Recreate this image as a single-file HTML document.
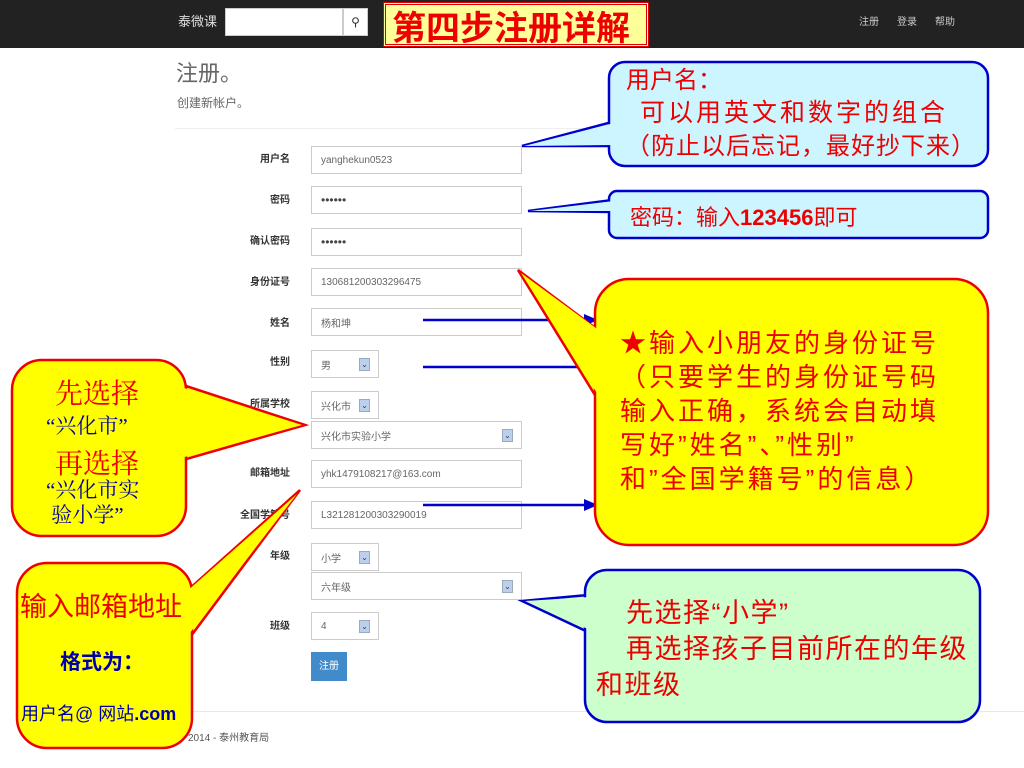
<!DOCTYPE html>
<html><head><meta charset="utf-8"><style>
*{margin:0;padding:0;box-sizing:border-box}
body{width:1024px;height:768px;position:relative;background:#fff;overflow:hidden;font-family:"Liberation Sans","Noto Sans CJK SC",sans-serif}
.a{position:absolute}
.nav{left:0;top:0;width:1024px;height:48px;background:#222}
.lbl{position:absolute;right:734px;font-size:10px;font-weight:bold;color:#333;text-align:right;white-space:nowrap}
.in{position:absolute;left:311px;width:211px;height:28px;border:1px solid #ccc;background:#fff;font-size:10px;color:#666;padding:0 9px;display:flex;align-items:center}
.sel{width:68px}
.arr{position:absolute;right:8px;top:7px;width:11px;height:13px;background:#bcd0ee;border:1px solid #9ab;font-size:8px;line-height:11px;text-align:center;color:#335}
.t{position:absolute;font-family:"Liberation Sans","Noto Sans CJK SC",sans-serif;white-space:nowrap}
.sf{font-family:"Liberation Serif","Noto Serif CJK SC",serif}
.s{position:absolute;font-family:"Liberation Sans","Noto Sans CJK SC",sans-serif;white-space:nowrap}
</style></head><body>
<div class="a nav"></div>
<div class="s" style="left:178px;top:11px;color:#ddd;font-size:13px">泰微课</div>
<div class="a" style="left:225px;top:8px;width:118px;height:28px;background:#fff;border:1px solid #ccc"></div>
<div class="a" style="left:343px;top:8px;width:25px;height:28px;background:#fff;border:1px solid #ccc;font-size:12px;text-align:center;line-height:26px;color:#333">&#9906;</div>
<div class="a" style="left:383px;top:2px;width:266px;height:45px;background:#ffff99;border:3px double #d00"></div>
<div class="s" style="left:392px;top:1px;color:#e00;font-size:34px;font-weight:bold">第四步注册详解</div>
<div class="s" style="left:859px;top:13px;color:#ccc;font-size:10px">注册</div>
<div class="s" style="left:897px;top:13px;color:#ccc;font-size:10px">登录</div>
<div class="s" style="left:935px;top:13px;color:#ccc;font-size:10px">帮助</div>

<div class="s" style="left:176px;top:56px;color:#666;font-size:22px">注册。</div>
<div class="s" style="left:177px;top:94px;color:#666;font-size:12px">创建新帐户。</div>
<div class="a" style="left:175px;top:128px;width:420px;height:1px;background:#eee"></div>

<div class="lbl" style="top:150px">用户名</div>
<div class="in" style="top:146px">yanghekun0523</div>
<div class="lbl" style="top:191px">密码</div>
<div class="in" style="top:186px;font-size:12px;color:#444">••••••</div>
<div class="lbl" style="top:232px">确认密码</div>
<div class="in" style="top:228px;font-size:12px;color:#444">••••••</div>
<div class="lbl" style="top:273px">身份证号</div>
<div class="in" style="top:268px">130681200303296475</div>
<div class="lbl" style="top:314px">姓名</div>
<div class="in" style="top:308px">杨和坤</div>
<div class="lbl" style="top:353px">性别</div>
<div class="in sel" style="top:350px">男<span class="arr">⌄</span></div>
<div class="lbl" style="top:395px">所属学校</div>
<div class="in sel" style="top:391px">兴化市<span class="arr">⌄</span></div>
<div class="in" style="top:421px">兴化市实验小学<span class="arr">⌄</span></div>
<div class="lbl" style="top:464px">邮箱地址</div>
<div class="in" style="top:460px">yhk1479108217@163.com</div>
<div class="lbl" style="top:506px">全国学籍号</div>
<div class="in" style="top:501px">L321281200303290019</div>
<div class="lbl" style="top:547px">年级</div>
<div class="in sel" style="top:543px">小学<span class="arr">⌄</span></div>
<div class="in" style="top:572px">六年级<span class="arr">⌄</span></div>
<div class="lbl" style="top:617px">班级</div>
<div class="in sel" style="top:612px">4<span class="arr">⌄</span></div>
<div class="a" style="left:311px;top:652px;width:36px;height:29px;background:#428bca;color:#fff;font-size:10px;text-align:center;line-height:29px">注册</div>
<div class="a" style="left:175px;top:711px;width:849px;height:1px;background:#e8e8e8"></div>
<div class="s" style="left:188px;top:729px;color:#555;font-size:10px">2014 - 泰州教育局</div>

<svg class="a" style="left:0;top:0" width="1024" height="768">
<g stroke-width="2.5">
<line x1="423" y1="320" x2="590" y2="320" stroke="#00c"/><polygon points="598,320 584,314 584,326" fill="#00c"/>
<line x1="423" y1="367" x2="590" y2="367" stroke="#00c"/><polygon points="598,367 584,361 584,373" fill="#00c"/>
<line x1="423" y1="505" x2="590" y2="505" stroke="#00c"/><polygon points="598,505 584,499 584,511" fill="#00c"/>
<polygon points="522,146 612,122 612,146" fill="#ccf5ff" stroke="#00c"/>
<rect x="609" y="62" width="379" height="104" rx="16" fill="#ccf5ff" stroke="#00c"/>
<polygon points="524,146 614,123 614,145" fill="#ccf5ff"/>
<polygon points="528,211 612,200 612,212" fill="#ccf5ff" stroke="#00c"/>
<rect x="609" y="191" width="379" height="47" rx="8" fill="#ccf5ff" stroke="#00c"/>
<polygon points="530,211 614,201 614,211" fill="#ccf5ff"/>
<polygon points="518,270 598,330 598,400" fill="#ff0" stroke="#e00"/>
<rect x="595" y="279" width="393" height="266" rx="34" fill="#ff0" stroke="#e00"/>
<polygon points="521,273 600,331 600,398" fill="#ff0"/>
<polygon points="305,425 183,385 183,460" fill="#ff0" stroke="#e00"/>
<rect x="12" y="360" width="174" height="176" rx="30" fill="#ff0" stroke="#e00"/>
<polygon points="302,425 181,387 181,458" fill="#ff0"/>
<polygon points="300,490 188,590 188,640" fill="#ff0" stroke="#e00"/>
<rect x="17" y="563" width="175" height="185" rx="30" fill="#ff0" stroke="#e00"/>
<polygon points="297,494 186,592 186,638" fill="#ff0"/>
<polygon points="522,601 588,595 588,632" fill="#ccffcc" stroke="#00c"/>
<rect x="585" y="570" width="395" height="152" rx="22" fill="#ccffcc" stroke="#00c"/>
<polygon points="525,601 590,597 590,630" fill="#ccffcc"/>
</g>
</svg>

<div class="t" style="left:626px;top:64px;color:#e00;font-size:24px;line-height:33px">用户名：</div>
<div class="t" style="left:640px;top:97px;color:#e00;font-size:25px;line-height:33px;letter-spacing:3px">可以用英文和数字的组合</div>
<div class="t" style="left:626px;top:130px;color:#e00;font-size:24px;line-height:33px;letter-spacing:1px">（防止以后忘记，最好抄下来）</div>
<div class="t" style="left:630px;top:200px;color:#e00;font-size:22px">密码：输入<b>123456</b>即可</div>
<div class="t" style="left:620px;top:326px;color:#e00;font-size:26px;line-height:34px;letter-spacing:3px">★输入小朋友的身份证号<br>（只要学生的身份证号码<br>输入正确，系统会自动填<br>写好”姓名”、”性别”<br>和”全国学籍号”的信息）</div>
<div class="t sf" style="left:55px;top:372px;color:#e00;font-size:28px">先选择</div>
<div class="t sf" style="left:46px;top:410px;color:#00a;font-size:21px">“兴化市”</div>
<div class="t sf" style="left:55px;top:442px;color:#e00;font-size:28px">再选择</div>
<div class="t sf" style="left:46px;top:478px;color:#00a;font-size:21px;line-height:25px">“兴化市实<br>&nbsp;验小学”</div>
<div class="t" style="left:20px;top:585px;color:#e00;font-size:27px">输入邮箱地址</div>
<div class="t" style="left:60px;top:646px;color:#00a;font-size:21px;font-weight:bold">格式为：</div>
<div class="t" style="left:21px;top:700px;color:#00a;font-size:18px">用户名@ 网站<b>.com</b></div>
<div class="t" style="left:626px;top:595px;color:#e00;font-size:27px;line-height:36px;letter-spacing:1.5px">先选择“小学”<br>再选择孩子目前所在的年级</div>
<div class="t" style="left:596px;top:667px;color:#e00;font-size:27px;line-height:36px;letter-spacing:1.5px">和班级</div>
</body></html>
